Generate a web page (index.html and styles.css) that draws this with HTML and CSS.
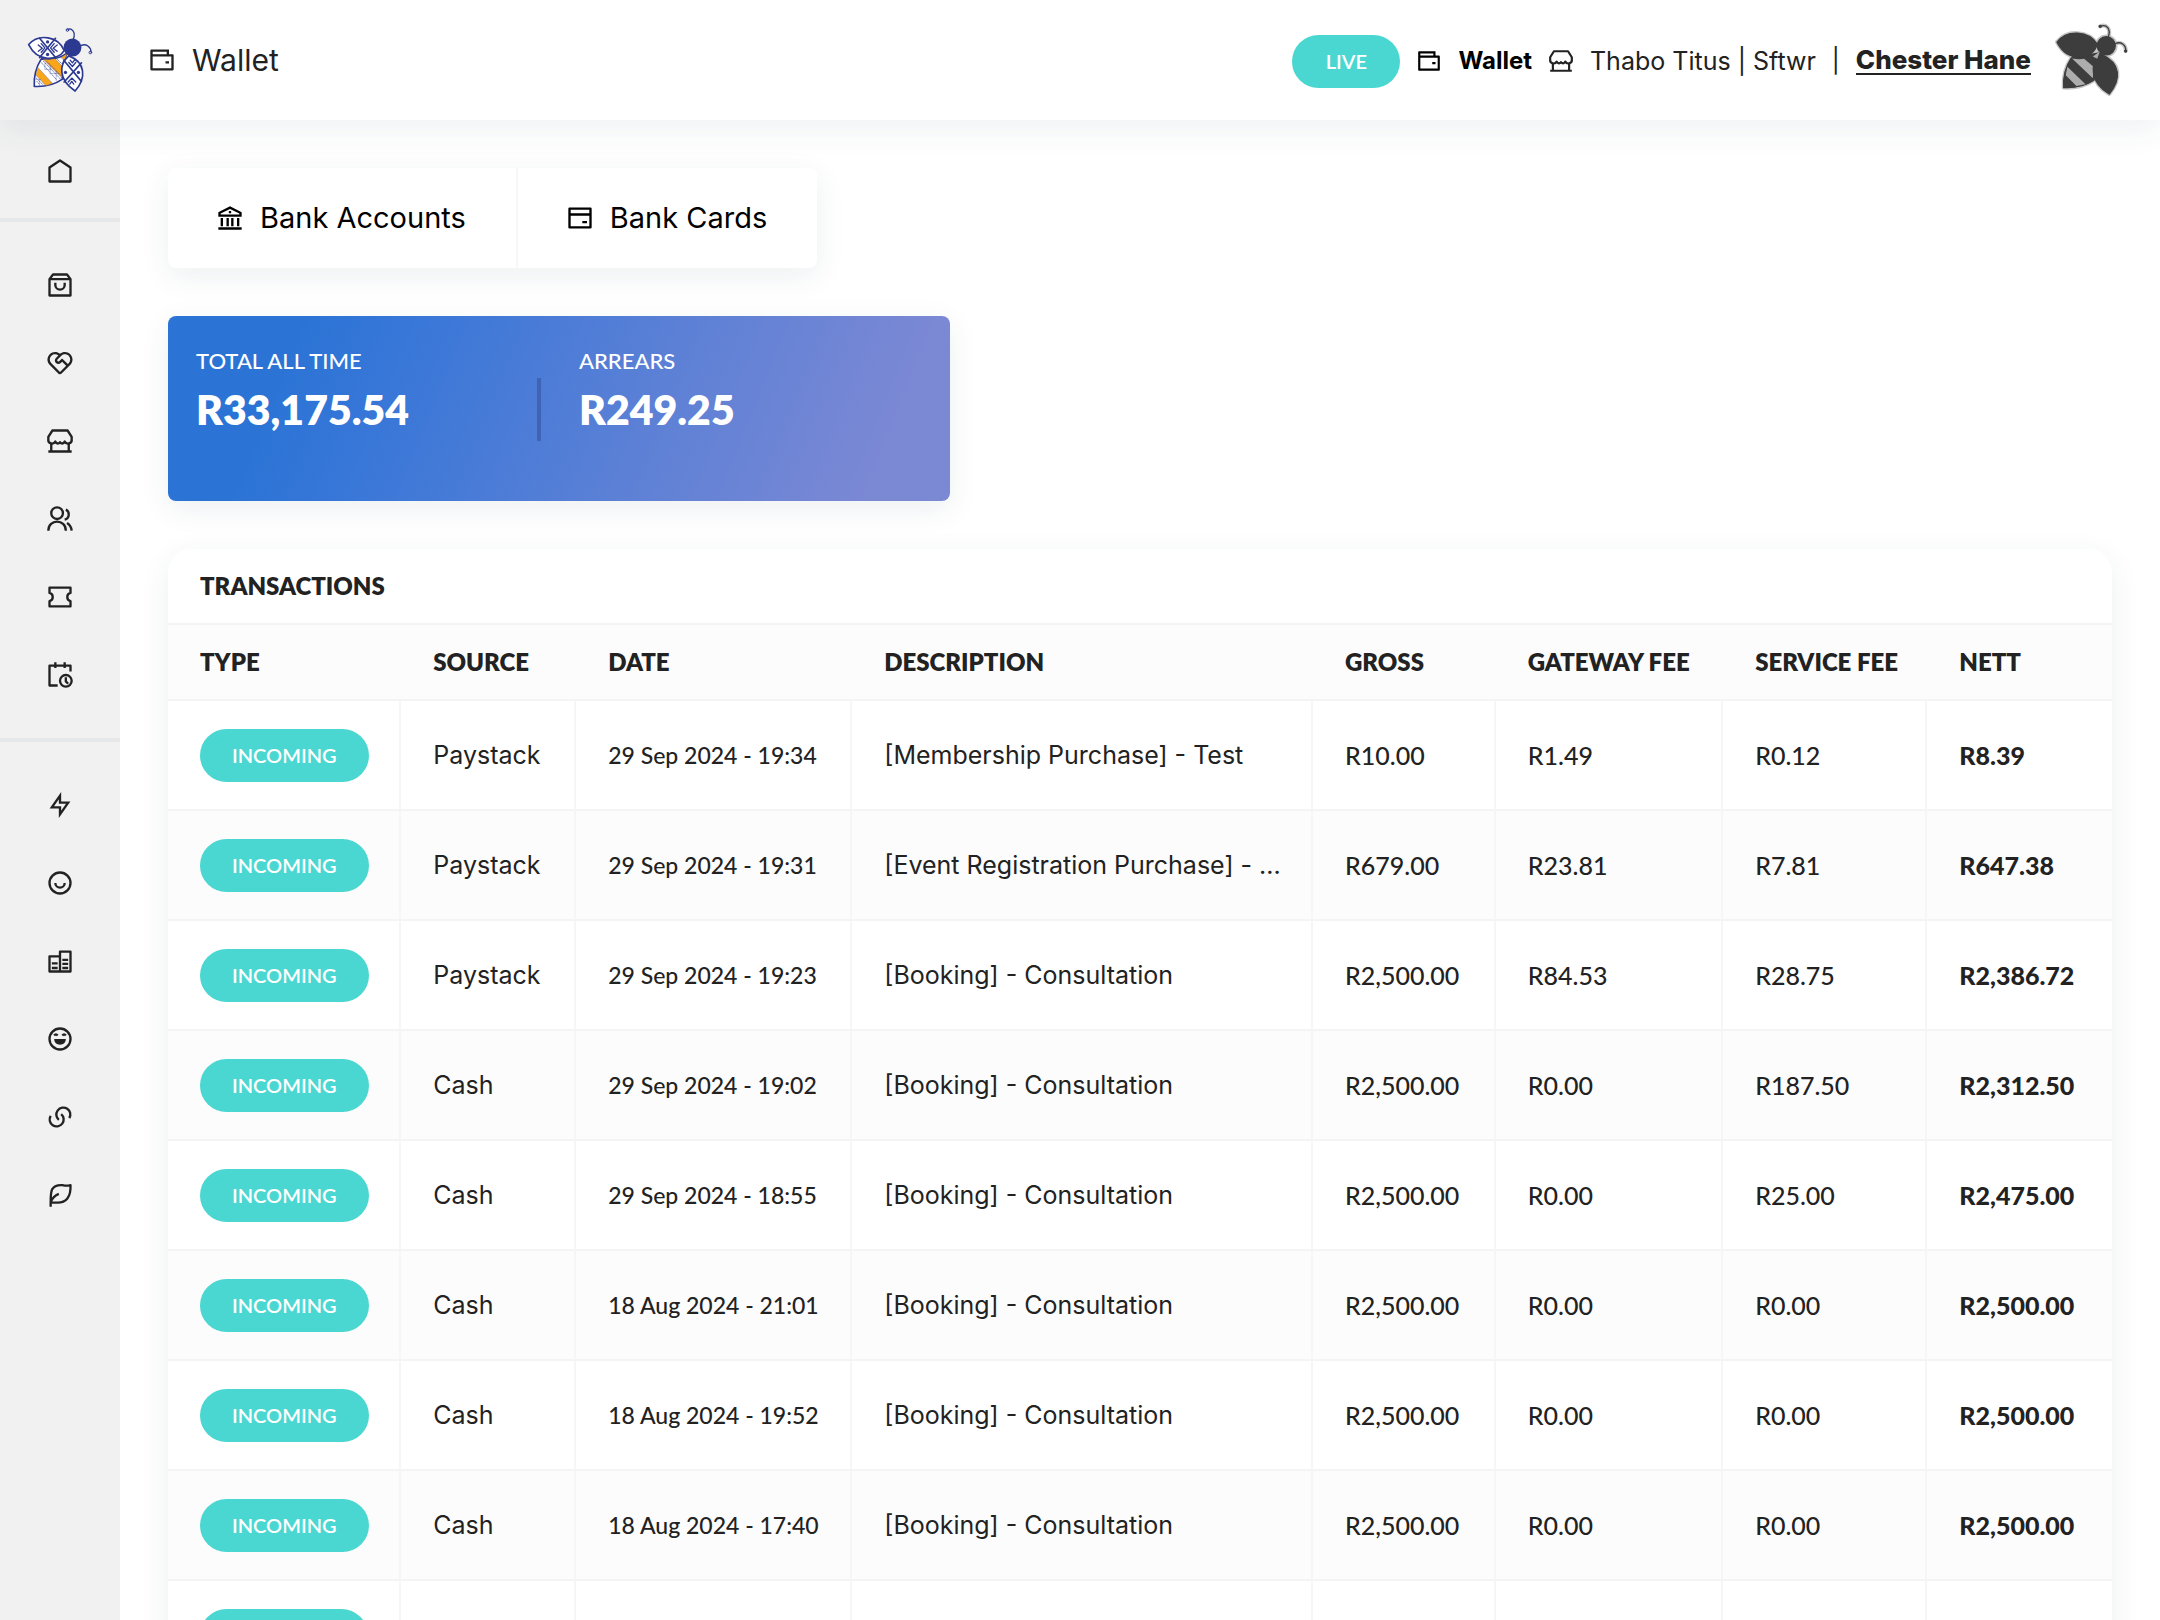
FILE: index.html
```html
<!DOCTYPE html>
<html lang="en">
<head>
<meta charset="utf-8">
<title>Wallet</title>
<link rel="stylesheet" href="styles.css">
</head>
<body>
<svg class="sprite" aria-hidden="true">
	<symbol id="i-wallet" viewBox="0 0 24 24"><path d="M18 7H21C21.6 7 22 7.4 22 8V20C22 20.6 21.6 21 21 21H3C2.4 21 2 20.6 2 20V4C2 3.4 2.4 3 3 3H18V7ZM4 9V19H20V9H4ZM4 5V7H16V5H4ZM15 13H18V15H15V13Z"/></symbol>
	<symbol id="i-store" viewBox="0 0 24 24"><g class="line"><path d="M5.500 3H18.500L22 8.500V10.500A3.200 3.200 0 0 1 16 12.500Q14 15.500 12 13Q10 15.500 8 12.500A3.200 3.200 0 0 1 2 10.500V8.500Z"/><path d="M4.500 13.500V21M19.500 13.500V21M2 21H22"/></g></symbol>
</svg>
<div class="app">
	<header class="topbar">
		<a class="logo" href="#" aria-label="Home">
			<svg viewBox="50 50 202 202" width="67" height="67">
				<g fill="none" stroke="#2b3990" stroke-width="5" stroke-linejoin="round" stroke-linecap="round">
					<path fill="#fff" d="M93 146C78 170 70 200 72 229C105 231 135 222 157 207C150 178 158 152 172 128C150 145 122 150 93 146Z"/>
					<path fill="#faa61a" stroke-width="1" d="M98 147C112 149 124 148 134 145L158 170L155 202ZM82 171L127 220L107 227L77 195ZM153 142L172 129L164 149Z"/>
					<path stroke-width="2" stroke-dasharray="3 4" d="M94 158L140 210M100 154L150 206M110 154L154 198M78 204L98 224M80 214L88 224M140 146L156 162"/>
					<path stroke-width="1" d="M104 160V178M120 166V192M106 178H124M124 190H144M138 184V212M76 208H90M88 208V228"/>
					<path fill="#fff" d="M55 103C85 68 145 78 162 121C143 153 82 157 55 103Z"/>
					<path fill="#fff" d="M176 137C146 163 144 208 195 243C230 203 226 156 176 137Z"/>
					<path d="M88 84L136 142M136 84L88 142M164 154L214 214M214 158L162 216"/>
					<path stroke-width="4" d="M84 104L96 114L84 123M93 100L104 113L93 126M141 104L129 114L141 123M132 100L121 113L132 126M176 157L187 169L197 157M180 150L187 158L193 150M174 216L185 204L197 216M179 222L185 214L191 222"/>
					<path stroke-width="4" d="M190 86C198 65 184 52 173 57M213 106C228 98 243 111 243 125"/>
					<circle cx="172" cy="59" r="4" stroke-width="3"/><circle cx="241" cy="127" r="4" stroke-width="3"/>
				</g>
				<g fill="#2b3990"><circle cx="187" cy="112" r="27"/><circle cx="112" cy="95" r="5"/><circle cx="112" cy="133" r="5"/><circle cx="166" cy="187" r="5"/><circle cx="205" cy="187" r="5"/></g>
			</svg>
		</a>
		<h1 class="page-title"><svg class="icon"><use href="#i-wallet"/></svg>Wallet</h1>
		<div class="account">
			<button class="pill pill-live" type="button">LIVE</button>
			<a class="account-wallet" href="#"><svg class="icon"><use href="#i-wallet"/></svg>Wallet</a>
			<a class="account-store" href="#"><svg class="icon"><use href="#i-store"/></svg>Thabo Titus | Sftwr</a>
			<span class="sep">|</span>
			<a class="account-user" href="#">Chester Hane</a>
			<svg class="avatar" viewBox="68 42 230 230" width="77" height="77">
				<g stroke="#c4c4c4" stroke-width="12" fill="none" stroke-linejoin="round" stroke-linecap="round">
					<path d="M80 99C110 60 175 65 200 105C190 150 115 168 80 99ZM123 146C107 170 98 205 100 235C138 237 165 229 190 213L214 130ZM212 135C175 165 180 220 236 254C272 210 272 163 212 135Z"/>
					<circle cx="227" cy="110" r="28"/><path d="M233 84C242 60 228 44 209 52M254 104C270 95 287 108 285 126"/>
				</g>
				<g fill="#3d3d3d" stroke="#3d3d3d" stroke-width="4" stroke-linejoin="round" stroke-linecap="round">
					<path d="M123 146C107 170 98 205 100 235C138 237 165 229 190 213L214 130Z"/>
					<path stroke="none" fill="#adadad" d="M125 148C140 151 152 151 161 149L189 173L187 207ZM111 173L165 225L138 230L106 198Z"/>
					<path d="M80 99C110 60 175 65 200 105C190 150 115 168 80 99ZM212 135C175 165 180 220 236 254C272 210 272 163 212 135Z"/>
					<circle cx="227" cy="110" r="27"/>
					<path stroke="none" fill="#adadad" d="M187 142L208 127L200 149Z"/>
					<path fill="none" d="M233 84C242 60 228 44 209 52M254 104C270 95 287 108 285 126"/>
					<circle cx="209" cy="52" r="3"/><circle cx="285" cy="126" r="3"/>
				</g>
			</svg>
		</div>
	</header>
	<nav class="sidebar" aria-label="Main">
		<ul>
			<li><a href="#" aria-label="Home"><svg class="icon" viewBox="0 0 24 24"><path class="line" d="M3 21V9L12 3L21 9V21Z"/></svg></a></li>
		</ul>
		<ul>
			<li><a href="#" aria-label="Shop"><svg class="icon" viewBox="0 0 24 24"><path class="line" d="M3 7L6 3H18L21 7V21H3ZM3 7H21M8 10V12A4 4 0 0 0 16 12V10"/></svg></a></li>
			<li><a href="#" aria-label="Donations"><svg class="icon" viewBox="0 0 24 24"><path d="M3.161 4.469C5.585 2.045 9.447 1.936 12 4.141C14.553 1.936 18.415 2.045 20.839 4.469C23.258 6.888 23.372 10.741 21.179 13.295L13.414 21.086C12.669 21.831 11.481 21.865 10.695 21.187L2.821 13.295C.628 10.741.742 6.888 3.161 4.469ZM4.575 5.883C2.868 7.590 2.819 10.328 4.429 12.094L12 19.672L17.303 14.368L13.768 10.833L12.707 11.893C11.536 13.065 9.636 13.065 8.464 11.893C7.293 10.722 7.293 8.822 8.464 7.651L10.566 5.548C8.853 4.177 6.371 4.240 4.729 5.737ZM13.061 8.711C13.451 8.321 14.084 8.321 14.475 8.711L18.717 12.953L19.425 12.247C21.182 10.490 21.182 7.640 19.425 5.883C17.717 4.176 14.980 4.127 13.214 5.737L9.879 9.065C9.516 9.428 9.490 9.999 9.801 10.392C10.241 10.842 10.813 10.868 11.206 10.557Z"/></svg></a></li>
			<li><a href="#" aria-label="Store"><svg class="icon"><use href="#i-store"/></svg></a></li>
			<li><a href="#" aria-label="Members"><svg class="icon" viewBox="0 0 24 24"><g class="line"><circle cx="9.500" cy="7" r="5"/><path d="M2 22C2 11.700 17 11.700 17 22M17 4C20.500 5.500 20.500 11.500 16 12.500M18 15.500Q21.500 17.500 22 22"/></g></svg></a></li>
			<li><a href="#" aria-label="Tickets"><svg class="icon" viewBox="0 0 24 24"><path class="line" d="M3 4H21V8.500A3.600 3.600 0 0 0 21 15.500V20H3V15.500A3.600 3.600 0 0 0 3 8.500Z"/></svg></a></li>
			<li><a href="#" aria-label="Bookings"><svg class="icon" viewBox="0 0 24 24"><g class="line"><path d="M10 21H3V4H21V9M8 1V6M16 1V6"/><circle cx="17" cy="17" r="5"/><path d="M17 14V17.500L19 19.500"/></g></svg></a></li>
		</ul>
		<ul>
			<li><a href="#" aria-label="Actions"><svg class="icon" viewBox="0 0 24 24"><path class="line bolt" d="M12 4V10H19L12 20V14H5Z"/></svg></a></li>
			<li><a href="#" aria-label="Profile"><svg class="icon" viewBox="0 0 24 24"><g class="line"><circle cx="12" cy="12" r="9"/><path d="M8 12A4 4 0 0 0 16 12"/></g></svg></a></li>
			<li><a href="#" aria-label="Business"><svg class="icon" viewBox="0 0 24 24"><path class="line" d="M3 21V8H12V21ZM12 21V4H21V21ZM5 14H10M5 18H10M14 11H19M14 14.500H19M14 18H19"/></svg></a></li>
			<li><a href="#" aria-label="Fun"><svg class="icon" viewBox="0 0 24 24"><g class="line"><circle cx="12" cy="12" r="9"/><path d="M7 9Q8.500 7 10 9M14 9Q15.500 7 17 9"/></g><path d="M7 12H17C17 18.500 7 18.500 7 12Z"/></svg></a></li>
			<li><a href="#" aria-label="Links"><svg class="icon" viewBox="0 0 24 24"><path class="line" d="M11 14.500A6 6 0 1 1 20 13M13 9.500A6 6 0 1 1 4 11"/></svg></a></li>
			<li><a href="#" aria-label="Nature"><svg class="icon" viewBox="0 0 24 24"><path class="line" d="M4 22C4 10 3 3 14 3.500Q18 4.500 21 3.500C21.500 14 17 18.500 10 18.500H5M4 18Q6 13 11 11"/></svg></a></li>
		</ul>
	</nav>
	<main class="content">
		<div class="tabs">
			<a href="#"><svg class="icon" viewBox="0 0 24 24"><path d="M2 20H22V22H2ZM4 12H6V19H4ZM9 12H11V19H9ZM13 12H15V19H13ZM18 12H20V19H18ZM2 7L12 2L22 7V11H2ZM4 8.200V9H20V8.200L12 4.200ZM11 6H13V8H11Z"/></svg>Bank Accounts</a>
			<a href="#"><svg class="icon" viewBox="0 0 24 24"><path class="line" d="M3 4H21V20H3ZM3 9H21M14 15.500H18"/></svg>Bank Cards</a>
		</div>
		<section class="summary">
			<div class="figure"><span>TOTAL ALL TIME</span><strong>R33,175.54</strong></div>
			<div class="figure"><span>ARREARS</span><strong>R249.25</strong></div>
		</section>
		<section class="panel">
			<h2>TRANSACTIONS</h2>
			<table>
				<colgroup><col class="c-type"><col class="c-source"><col class="c-date"><col class="c-desc"><col class="c-gross"><col class="c-gateway"><col class="c-service"><col class="c-nett"></colgroup>
				<thead>
					<tr><th>TYPE</th><th>SOURCE</th><th>DATE</th><th>DESCRIPTION</th><th>GROSS</th><th>GATEWAY FEE</th><th>SERVICE FEE</th><th>NETT</th></tr>
				</thead>
				<tbody>
					<tr><td><span class="pill">INCOMING</span></td><td class="text">Paystack</td><td class="date">29 Sep 2024 - 19:34</td><td class="text">[Membership Purchase] - Test</td><td>R10.00</td><td>R1.49</td><td>R0.12</td><td class="nett">R8.39</td></tr>
					<tr><td><span class="pill">INCOMING</span></td><td class="text">Paystack</td><td class="date">29 Sep 2024 - 19:31</td><td class="text">[Event Registration Purchase] - ...</td><td>R679.00</td><td>R23.81</td><td>R7.81</td><td class="nett">R647.38</td></tr>
					<tr><td><span class="pill">INCOMING</span></td><td class="text">Paystack</td><td class="date">29 Sep 2024 - 19:23</td><td class="text">[Booking] - Consultation</td><td>R2,500.00</td><td>R84.53</td><td>R28.75</td><td class="nett">R2,386.72</td></tr>
					<tr><td><span class="pill">INCOMING</span></td><td class="text">Cash</td><td class="date">29 Sep 2024 - 19:02</td><td class="text">[Booking] - Consultation</td><td>R2,500.00</td><td>R0.00</td><td>R187.50</td><td class="nett">R2,312.50</td></tr>
					<tr><td><span class="pill">INCOMING</span></td><td class="text">Cash</td><td class="date">29 Sep 2024 - 18:55</td><td class="text">[Booking] - Consultation</td><td>R2,500.00</td><td>R0.00</td><td>R25.00</td><td class="nett">R2,475.00</td></tr>
					<tr><td><span class="pill">INCOMING</span></td><td class="text">Cash</td><td class="date">18 Aug 2024 - 21:01</td><td class="text">[Booking] - Consultation</td><td>R2,500.00</td><td>R0.00</td><td>R0.00</td><td class="nett">R2,500.00</td></tr>
					<tr><td><span class="pill">INCOMING</span></td><td class="text">Cash</td><td class="date">18 Aug 2024 - 19:52</td><td class="text">[Booking] - Consultation</td><td>R2,500.00</td><td>R0.00</td><td>R0.00</td><td class="nett">R2,500.00</td></tr>
					<tr><td><span class="pill">INCOMING</span></td><td class="text">Cash</td><td class="date">18 Aug 2024 - 17:40</td><td class="text">[Booking] - Consultation</td><td>R2,500.00</td><td>R0.00</td><td>R0.00</td><td class="nett">R2,500.00</td></tr>
					<tr><td><span class="pill"></span></td><td></td><td></td><td></td><td></td><td></td><td></td><td></td></tr>
				</tbody>
			</table>
		</section>
	</main>
</div>
</body>
</html>
```
FILE: styles.css
```css
*{
	margin: 0;
	padding: 0;
	box-sizing: border-box;
}
body{
	font: 500 24px/32px Lato, "Liberation Sans", sans-serif;
	color: #222;
	background: #fff;
}
a{
	color: inherit;
	text-decoration: none;
}
ul{
	list-style: none;
}
.sprite{
	display: none;
}
.icon{
	width: 28px;
	height: 28px;
	flex: none;
	fill: currentColor;
}
.line{
	fill: none;
	stroke: currentColor;
	stroke-width: 2;
	stroke-linejoin: round;
}
.bolt{
	stroke-linejoin: miter;
}
.app{
	display: grid;
	grid-template: 120px minmax(0, 1fr) / 120px minmax(0, 1fr);
	height: 100vh;
	overflow: hidden;
}

/* header */
.topbar{
	grid-column: 1 / 3;
	display: flex;
	align-items: center;
	padding-right: 30px;
	background: #fff;
	box-shadow: 0 10px 30px rgba(30, 70, 80, .07);
	z-index: 2;
	font-family: Inter, "Liberation Sans", sans-serif;
	font-weight: 400;
}
.logo{
	display: flex;
	align-items: center;
	justify-content: center;
	width: 120px;
	height: 120px;
	background: #f1f1f1;
}
.page-title{
	display: flex;
	align-items: center;
	gap: 16px;
	margin-left: 28px;
	font-size: 30px;
	font-weight: 400;
}
.account{
	display: flex;
	align-items: center;
	margin-left: auto;
	padding-top: 2px;
}
.account a{
	display: flex;
	align-items: center;
	gap: 16px;
}
.pill{
	display: inline-block;
	height: 53px;
	min-width: 108px;
	padding: 0 32px;
	border: 0;
	border-radius: 27px;
	background: #4bd7d1;
	color: #fff;
	font: 600 20px/53px Lato, "Liberation Sans", sans-serif;
	vertical-align: middle;
}
td .pill{
	min-width: 168px;
}
.account .icon{
	width: 26px;
	height: 26px;
}
.account .account-wallet{
	margin: 0 16px;
	color: #000;
	font-weight: 700;
}
.account .account-store{
	font-size: 25px;
}
.sep{
	margin: 0 16px;
}
.account .account-user{
	margin-right: 22px;
	border-bottom: 2px solid #222;
	font-size: 26px;
	line-height: 26px;
	font-weight: 800;
}

/* sidebar */
.sidebar{
	background: #f1f1f1;
}
.sidebar ul{
	padding: 24px 0;
	border-bottom: 4px solid #e6e7e9;
}
.sidebar ul:first-child{
	padding: 12px 0 8px;
}
.sidebar ul:last-child{
	border: 0;
}
.sidebar a{
	display: flex;
	align-items: center;
	justify-content: center;
	height: 78px;
}

/* content */
.content{
	display: flex;
	flex-direction: column;
	align-items: flex-start;
	gap: 48px;
	padding: 48px;
	overflow: hidden auto;
	scrollbar-width: none;
}
.tabs,
.summary,
.panel{
	flex: none;
	border-radius: 8px;
	background: #fff;
	box-shadow: 0 8px 30px rgba(30, 70, 80, .08);
}
.tabs{
	display: flex;
	color: #000;
	font: 400 29px/36px Inter, "Liberation Sans", sans-serif;
}
.tabs a{
	display: flex;
	align-items: center;
	gap: 16px;
	padding: 32px 50px 32px 48px;
}
.tabs a + a{
	border-left: 2px solid #f7f7f7;
}
.summary{
	display: grid;
	grid-template-columns: 345px 1fr;
	width: 782px;
	padding: 28px;
	padding-bottom: 60px;
	background: linear-gradient(112deg, #2b74d5 16%, #3576d8 26%, #5b80d6 60%, #7b88d4 90%);
	color: #fff;
}
.figure span{
	display: block;
	font-size: 22px;
	line-height: 34px;
}
.figure strong{
	display: block;
	font-size: 41px;
	font-weight: 800;
	line-height: 63px;
}
.figure + .figure{
	padding-left: 38px;
}
.figure:first-child strong{
	border-right: 4px solid #3f64b3;
}
.panel{
	align-self: stretch;
	border-radius: 24px;
	overflow: hidden;
}
.panel h2{
	padding: 21px 32px;
	font-size: 24px;
	font-weight: 800;
	line-height: 32px;
}
table{
	width: 100%;
	table-layout: fixed;
	border-spacing: 0;
	border-top: 2px solid #f4f4f4;
	text-align: left;
}
.c-type{ width: 12%; }
.c-source{ width: 9%; }
.c-date{ width: 14.2%; }
.c-desc{ width: 23.7%; }
.c-gross{ width: 9.4%; }
.c-gateway{ width: 11.7%; }
.c-service{ width: 10.5%; }
.c-nett{ width: 9.5%; }
th,
td{
	padding: 0 0 0 32px;
	border-bottom: 2px solid #f4f4f4;
	white-space: nowrap;
}
th{
	height: 76px;
	background: #fcfcfc;
	font-weight: 800;
}
td{
	height: 110px;
	border-right: 2px solid #f6f6f6;
	font-size: 25px;
}
td:last-child{
	border-right: 0;
}
tbody tr:nth-child(even){
	background: #fcfcfc;
}
.text{
	font-family: Inter, "Liberation Sans", sans-serif;
	font-weight: 400;
}
.date{
	font-size: 23px;
}
.nett{
	font-weight: 900;
}
```
